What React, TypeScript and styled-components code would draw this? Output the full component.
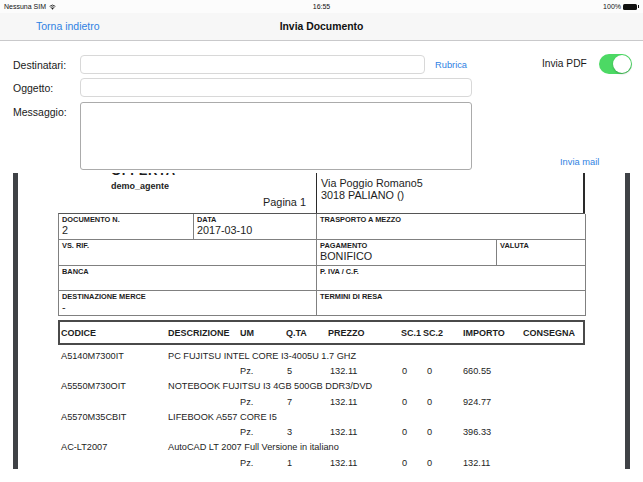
import React from "react";
import styled, { createGlobalStyle } from "styled-components";

const BLUE = "#2f82e3";
const DOC_FONT = `"Liberation Sans", Arial, Helvetica, sans-serif`;

const GlobalStyle = createGlobalStyle`
  * { box-sizing: border-box; }
  html, body { margin: 0; padding: 0; background: #fff; }
  body {
    width: 643px;
    height: 482px;
    overflow: hidden;
    font-family: ${DOC_FONT};
    -webkit-font-smoothing: antialiased;
  }
`;

const Screen = styled.div`
  width: 643px;
  height: 482px;
  display: flex;
  flex-direction: column;
  overflow: hidden;
  background: #fff;
`;

/* ---------- status bar ---------- */
const StatusBar = styled.div`
  height: 13px;
  flex: none;
  display: grid;
  grid-template-columns: 1fr auto 1fr;
  align-items: center;
  padding: 0 4px;
  font-size: 7px;
  color: #111;
  background: #fcfcfc;
`;

const StatusLeft = styled.div`
  display: flex;
  align-items: center;
  gap: 3px;
`;

const StatusRight = styled.div`
  justify-self: end;
  display: flex;
  align-items: center;
  gap: 2px;
`;

const Battery = styled.span`
  display: inline-flex;
  align-items: center;
  &::before {
    content: "";
    width: 14px;
    height: 6px;
    border-radius: 1.5px;
    background: #111;
  }
  &::after {
    content: "";
    width: 1.5px;
    height: 2.5px;
    background: #111;
    margin-left: 0.5px;
  }
`;

/* ---------- nav bar ---------- */
const NavBar = styled.div`
  height: 28px;
  flex: none;
  display: grid;
  grid-template-columns: 1fr auto 1fr;
  align-items: center;
  padding: 0 0 1px 36px;
  background: #f7f7f7;
  border-bottom: 1px solid #c9c9cb;
`;

const BackLink = styled.span`
  font-size: 10.5px;
  color: ${BLUE};
`;

const NavTitle = styled.span`
  font-size: 10.4px;
  font-weight: 700;
  color: #111;
  margin-left: -36px;
`;

/* ---------- form ---------- */
const FormArea = styled.div`
  height: 131px;
  flex: none;
  display: flex;
  padding: 14px 0 0 13px;
`;

const Fields = styled.div`
  display: grid;
  grid-template-columns: 67px 345px 47px;
  grid-template-rows: 19px 19px 69px;
  row-gap: 4px;
  align-content: start;
  & > :nth-child(7) { margin-top: 1px; }
`;

const Label = styled.label<{ $top?: boolean }>`
  font-size: 10.5px;
  color: #1a1a1a;
  align-self: ${(p) => (p.$top ? "start" : "center")};
  padding-top: ${(p) => (p.$top ? "5px" : "0")};
`;

const TextInput = styled.div<{ $span?: boolean }>`
  grid-column: ${(p) => (p.$span ? "2 / 4" : "2 / 3")};
  border: 1px solid #d8d8d8;
  border-radius: 4px;
  background: #fff;
`;

const TextArea = styled.div`
  grid-column: 2 / 4;
  border: 1px solid #ababab;
  border-radius: 3px;
  background: #fff;
`;

const SmallLink = styled.span<{ $indent?: number }>`
  font-size: 9.3px;
  color: ${BLUE};
  align-self: center;
  padding-left: ${(p) => p.$indent ?? 0}px;
`;

const Side = styled.div`
  margin-left: 70px;
  display: flex;
  flex-direction: column;
  height: 112px;
`;

const PdfRow = styled.div`
  display: flex;
  align-items: center;
  gap: 12px;
  height: 19px;
  margin-top: -1px;
`;

const PdfLabel = styled.span`
  font-size: 10.2px;
  color: #1a1a1a;
`;

const Track = styled.span`
  width: 33px;
  height: 20px;
  border-radius: 10px;
  background: #4cd964;
  display: flex;
  justify-content: flex-end;
  align-items: center;
  padding: 1px;
`;

const Knob = styled.span`
  width: 18px;
  height: 18px;
  border-radius: 50%;
  background: #fff;
  box-shadow: 0 1px 2px rgba(0, 0, 0, 0.25);
`;

const SendMail = styled.span`
  margin-top: auto;
  padding-left: 18px;
  font-size: 9.3px;
  color: ${BLUE};
`;

/* ---------- document viewer ---------- */
const Viewer = styled.div`
  flex: 1;
  padding-top: 1px;
  overflow: hidden;
`;

const Page = styled.div`
  margin-left: 13px;
  width: 617px;
  height: 296px;
  border-left: 5px solid #3f4246;
  border-right: 5px solid #3f4246;
  background: #fff;
  overflow: hidden;
  padding-left: 40px;
  color: #1d1d1d;
  font-family: ${DOC_FONT};
`;

const DocBody = styled.div`
  width: 527px;
  margin-top: -9px;
`;

const DocHeader = styled.div`
  display: grid;
  grid-template-columns: 258px 269px;
  height: 49px;
`;

const HeaderLeft = styled.div`
  display: flex;
  flex-direction: column;
  padding-left: 53px;
`;

const DocTitle = styled.div`
  font-size: 13px;
  font-weight: 700;
  line-height: 13px;
  letter-spacing: 0.6px;
  margin-bottom: 2px;
`;

const Agent = styled.div`
  font-size: 9px;
  font-weight: 700;
  line-height: 14px;
`;

const PageNo = styled.div`
  font-size: 10.9px;
  line-height: 14px;
  margin-top: 2px;
  text-align: right;
  padding-right: 10px;
`;

const AddressBox = styled.div`
  border-left: 1.5px solid #2a2a2a;
  border-right: 2px solid #2a2a2a;
  padding: 13px 0 0 4px;
  font-size: 10.8px;
  line-height: 12px;
`;

const InfoTable = styled.div`
  display: grid;
  grid-template-columns: 135px 123px 180px 89px;
  grid-template-rows: 26px 26px 25px 25px;
  border-top: 1px solid #555;
  border-left: 1px solid #808080;
`;

const Cell = styled.div<{ $span?: number }>`
  grid-column: span ${(p) => p.$span ?? 1};
  border-right: 1px solid #808080;
  border-bottom: 1px solid #808080;
  padding: 2px 0 0 3px;
  display: flex;
  flex-direction: column;
`;

const CellLabel = styled.span`
  font-size: 7.4px;
  font-weight: 700;
  line-height: 8px;
`;

const CellValue = styled.span`
  font-size: 10.8px;
  line-height: 12px;
`;

const COLS = "107px 72px 46px 42px 73px 22px 40px 60px 1fr";

const ItemsHead = styled.div`
  margin-top: 4px;
  height: 25px;
  border: 2px solid #4a4a4a;
  display: grid;
  grid-template-columns: ${COLS};
  align-items: center;
  padding-left: 1px;
  font-size: 9px;
  font-weight: 700;
`;

const Items = styled.div`
  padding: 3px 0 0 3px;
`;

const ItemRow = styled.div`
  display: grid;
  grid-template-columns: ${COLS};
  grid-auto-rows: 15.3px;
  align-items: center;
  font-size: 9.2px;
`;

const Desc = styled.span`
  grid-column: 2 / -1;
  white-space: nowrap;
`;

const Col = styled.span<{ $col: number; $pad?: number }>`
  grid-column: ${(p) => p.$col};
  grid-row: 2;
  padding-left: ${(p) => p.$pad ?? 0}px;
`;

const items = [
  { code: "A5140M7300IT", desc: "PC FUJITSU INTEL CORE I3-4005U 1.7 GHZ", qty: "5", imp: "660.55" },
  { code: "A5550M730OIT", desc: "NOTEBOOK FUJITSU I3 4GB 500GB DDR3/DVD", qty: "7", imp: "924.77" },
  { code: "A5570M35CBIT", desc: "LIFEBOOK A557 CORE I5", qty: "3", imp: "396.33" },
  { code: "AC-LT2007", desc: "AutoCAD LT 2007 Full Versione in italiano", qty: "1", imp: "132.11" },
];

const Wifi = () => (
  <svg width="7" height="6" viewBox="0 0 14 11">
    <path d="M7 11 L4.6 8.2 A3.6 3.6 0 0 1 9.4 8.2 Z" fill="#111" />
    <path d="M3.2 6.6 A5.8 5.8 0 0 1 10.8 6.6" stroke="#111" strokeWidth="1.6" fill="none" />
    <path d="M1.2 4.2 A8.6 8.6 0 0 1 12.8 4.2" stroke="#111" strokeWidth="1.6" fill="none" />
  </svg>
);

export default function App() {
  return (
    <Screen>
      <GlobalStyle />
      <StatusBar>
        <StatusLeft>
          <span>Nessuna SIM</span>
          <Wifi />
        </StatusLeft>
        <span>16:55</span>
        <StatusRight>
          <span>100%</span>
          <Battery />
        </StatusRight>
      </StatusBar>

      <NavBar>
        <BackLink>Torna indietro</BackLink>
        <NavTitle>Invia Documento</NavTitle>
        <span />
      </NavBar>

      <FormArea>
        <Fields>
          <Label>Destinatari:</Label>
          <TextInput />
          <SmallLink $indent={10}>Rubrica</SmallLink>
          <Label>Oggetto:</Label>
          <TextInput $span />
          <Label $top>Messaggio:</Label>
          <TextArea />
        </Fields>
        <Side>
          <PdfRow>
            <PdfLabel>Invia PDF</PdfLabel>
            <Track>
              <Knob />
            </Track>
          </PdfRow>
          <SendMail>Invia mail</SendMail>
        </Side>
      </FormArea>

      <Viewer>
        <Page>
          <DocBody>
            <DocHeader>
              <HeaderLeft>
                <DocTitle>OFFERTA</DocTitle>
                <Agent>demo_agente</Agent>
                <PageNo>Pagina 1</PageNo>
              </HeaderLeft>
              <AddressBox>
                <div>Via Poggio Romano5</div>
                <div>3018 PALIANO ()</div>
              </AddressBox>
            </DocHeader>

            <InfoTable>
              <Cell>
                <CellLabel>DOCUMENTO N.</CellLabel>
                <CellValue>2</CellValue>
              </Cell>
              <Cell>
                <CellLabel>DATA</CellLabel>
                <CellValue>2017-03-10</CellValue>
              </Cell>
              <Cell $span={2}>
                <CellLabel>TRASPORTO A MEZZO</CellLabel>
              </Cell>
              <Cell $span={2}>
                <CellLabel>VS. RIF.</CellLabel>
              </Cell>
              <Cell>
                <CellLabel>PAGAMENTO</CellLabel>
                <CellValue>BONIFICO</CellValue>
              </Cell>
              <Cell>
                <CellLabel>VALUTA</CellLabel>
              </Cell>
              <Cell $span={2}>
                <CellLabel>BANCA</CellLabel>
              </Cell>
              <Cell $span={2}>
                <CellLabel>P. IVA / C.F.</CellLabel>
              </Cell>
              <Cell $span={2}>
                <CellLabel>DESTINAZIONE MERCE</CellLabel>
                <CellValue>-</CellValue>
              </Cell>
              <Cell $span={2}>
                <CellLabel>TERMINI DI RESA</CellLabel>
              </Cell>
            </InfoTable>

            <ItemsHead>
              <span>CODICE</span>
              <span>DESCRIZIONE</span>
              <span>UM</span>
              <span>Q.TA</span>
              <span>PREZZO</span>
              <span>SC.1</span>
              <span>SC.2</span>
              <span>IMPORTO</span>
              <span>CONSEGNA</span>
            </ItemsHead>

            <Items>
              {items.map((it) => (
                <ItemRow key={it.code}>
                  <span>{it.code}</span>
                  <Desc>{it.desc}</Desc>
                  <Col $col={3}>Pz.</Col>
                  <Col $col={4} $pad={1}>{it.qty}</Col>
                  <Col $col={5} $pad={2}>132.11</Col>
                  <Col $col={6} $pad={1}>0</Col>
                  <Col $col={7} $pad={4}>0</Col>
                  <Col $col={8}>{it.imp}</Col>
                </ItemRow>
              ))}
            </Items>
          </DocBody>
        </Page>
      </Viewer>
    </Screen>
  );
}
